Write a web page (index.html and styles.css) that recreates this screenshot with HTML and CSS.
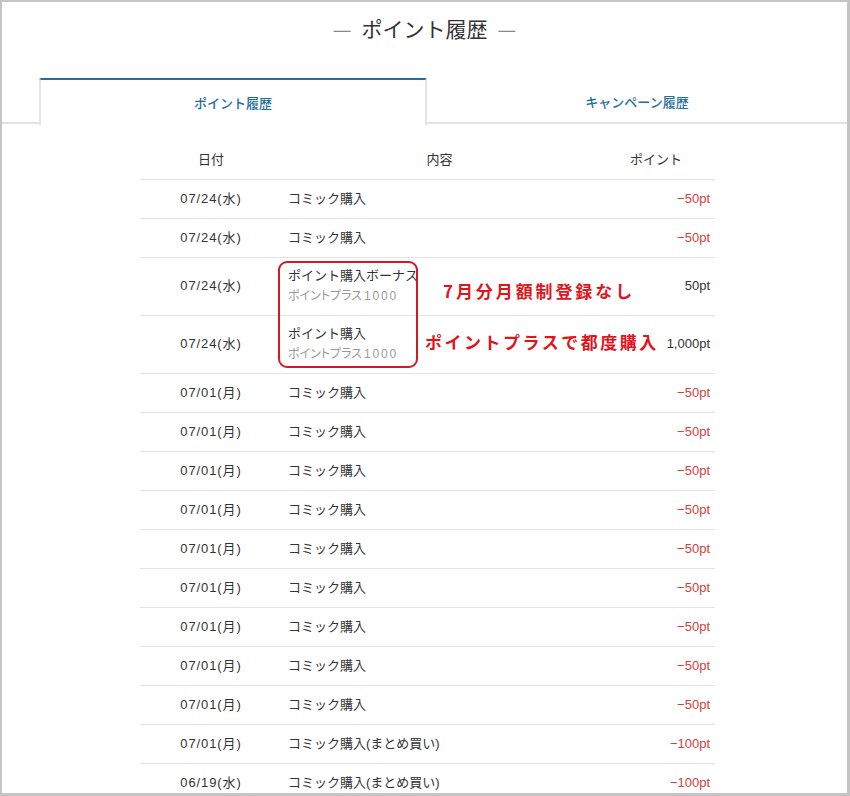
FILE: index.html
```html
<!DOCTYPE html>
<html lang="ja">
<head>
<meta charset="utf-8">
<title>ポイント履歴</title>
<link rel="stylesheet" href="styles.css">
</head>
<body>
<div class="frame">
  <h1 class="title"><span class="dash">—</span><span class="title-text">ポイント履歴</span><span class="dash">—</span></h1>
  <div class="tabs">
    <div class="tab active">ポイント履歴</div>
    <div class="tab">キャンペーン履歴</div>
  </div>
  <div class="history">
    <table class="table">
      <thead>
        <tr><th class="c-date">日付</th><th class="c-content">内容</th><th class="c-point">ポイント</th></tr>
      </thead>
      <tbody>
        <tr><td class="c-date">07/24(水)</td><td class="c-content">コミック購入</td><td class="c-point minus">−50pt</td></tr>
        <tr><td class="c-date">07/24(水)</td><td class="c-content">コミック購入</td><td class="c-point minus">−50pt</td></tr>
        <tr class="double"><td class="c-date">07/24(水)</td><td class="c-content"><div class="main">ポイント購入ボーナス</div><div class="sub">ポイントプラス<span class="num">1000</span></div></td><td class="c-point">50pt</td></tr>
        <tr class="double"><td class="c-date">07/24(水)</td><td class="c-content"><div class="main">ポイント購入</div><div class="sub">ポイントプラス<span class="num">1000</span></div></td><td class="c-point">1,000pt</td></tr>
        <tr><td class="c-date">07/01(月)</td><td class="c-content">コミック購入</td><td class="c-point minus">−50pt</td></tr>
        <tr><td class="c-date">07/01(月)</td><td class="c-content">コミック購入</td><td class="c-point minus">−50pt</td></tr>
        <tr><td class="c-date">07/01(月)</td><td class="c-content">コミック購入</td><td class="c-point minus">−50pt</td></tr>
        <tr><td class="c-date">07/01(月)</td><td class="c-content">コミック購入</td><td class="c-point minus">−50pt</td></tr>
        <tr><td class="c-date">07/01(月)</td><td class="c-content">コミック購入</td><td class="c-point minus">−50pt</td></tr>
        <tr><td class="c-date">07/01(月)</td><td class="c-content">コミック購入</td><td class="c-point minus">−50pt</td></tr>
        <tr><td class="c-date">07/01(月)</td><td class="c-content">コミック購入</td><td class="c-point minus">−50pt</td></tr>
        <tr><td class="c-date">07/01(月)</td><td class="c-content">コミック購入</td><td class="c-point minus">−50pt</td></tr>
        <tr><td class="c-date">07/01(月)</td><td class="c-content">コミック購入</td><td class="c-point minus">−50pt</td></tr>
        <tr><td class="c-date">07/01(月)</td><td class="c-content">コミック購入(まとめ買い)</td><td class="c-point minus">−100pt</td></tr>
        <tr><td class="c-date">06/19(水)</td><td class="c-content">コミック購入(まとめ買い)</td><td class="c-point minus">−100pt</td></tr>
      </tbody>
    </table>
    <div class="mark-box"></div>
    <div class="note note-1">7月分月額制登録なし</div>
    <div class="note note-2">ポイントプラスで都度購入</div>
  </div>
</div>
</body>
</html>
```

FILE: styles.css
```css
* { box-sizing: border-box; }
html, body { margin: 0; padding: 0; background: #fff; }
body {
  font-family: "Liberation Sans", "Noto Sans CJK JP", sans-serif;
  color: #333;
}
.frame {
  width: 850px;
  height: 796px;
  overflow: hidden;
  border-style: solid;
  border-color: #c4c4c4;
  border-width: 2px 3px 3px 2px;
  background: #fff;
}
.title {
  margin: 0;
  padding-top: 12px;
  height: 76px;
  font-size: 21px;
  line-height: 28px;
  font-weight: normal;
  text-align: center;
  color: #333;
  font-family: "Noto Sans CJK JP", sans-serif;
  display: flex;
  justify-content: center;
  gap: 10px;
}
.dash { color: #888; font-weight: normal; }
.tabs {
  display: flex;
  padding-left: 37px;
  border-bottom: 2px solid #e2e2e2;
  height: 46px;
}
.tab {
  flex: 1;
  height: 46px;
  display: flex;
  align-items: center;
  justify-content: center;
  font-size: 13px;
  color: #1f6d9e;
  font-family: "Noto Sans CJK JP", sans-serif;
  font-weight: 500;
}
.tab.active {
  flex: 0 0 388px;
  border-top: 2px solid #1f6fa3;
  border-left: 2px solid #e4e4e4;
  border-right: 2px solid #e4e4e4;
  background: #fff;
  height: 47px;
  margin-bottom: -2px;
  border-radius: 2px 2px 0 0;
}
.history {
  position: relative;
  width: 575px;
  margin: 17px 0 0 138px;
}
.table {
  width: 575px;
  border-collapse: collapse;
  font-size: 13px;
}
.table th, .table td {
  height: 39px;
  padding: 0;
  border-bottom: 1px solid #e3e3e3;
  vertical-align: middle;
  font-weight: normal;
  line-height: 20px;
}
.table th { height: 38px; }
.c-date { width: 142px; text-align: center; }
td.c-date { font-size: 13px; letter-spacing: 0.9px; }
.c-content { width: 315px; text-align: left; padding-left: 6px !important; }
.table th.c-content { text-align: center; padding-left: 0 !important; }
.c-point { width: 118px; text-align: right; padding-right: 5px !important; }
.table th.c-point { text-align: center; padding-right: 0 !important; }
.minus { color: #d2423c; }
.double td { height: 58px; }
.sub {
  color: #9a9a9a;
  font-size: 12px;
  font-feature-settings: "palt";
}
.sub .num { letter-spacing: 1.8px; margin-left: 2px; }
.mark-box {
  position: absolute;
  left: 138px;
  top: 120px;
  width: 140px;
  height: 107px;
  border: 2px solid #d01a26;
  border-radius: 9px;
}
.note {
  position: absolute;
  font-family: "Noto Sans CJK JP", sans-serif;
  font-weight: bold;
  font-size: 17px;
  line-height: 22px;
  letter-spacing: 2.5px;
  color: #e0141a;
  white-space: nowrap;
}
.note-1 { left: 303px; top: 139px; letter-spacing: 2.9px; }
.note-2 { left: 285px; top: 190px; }
```
